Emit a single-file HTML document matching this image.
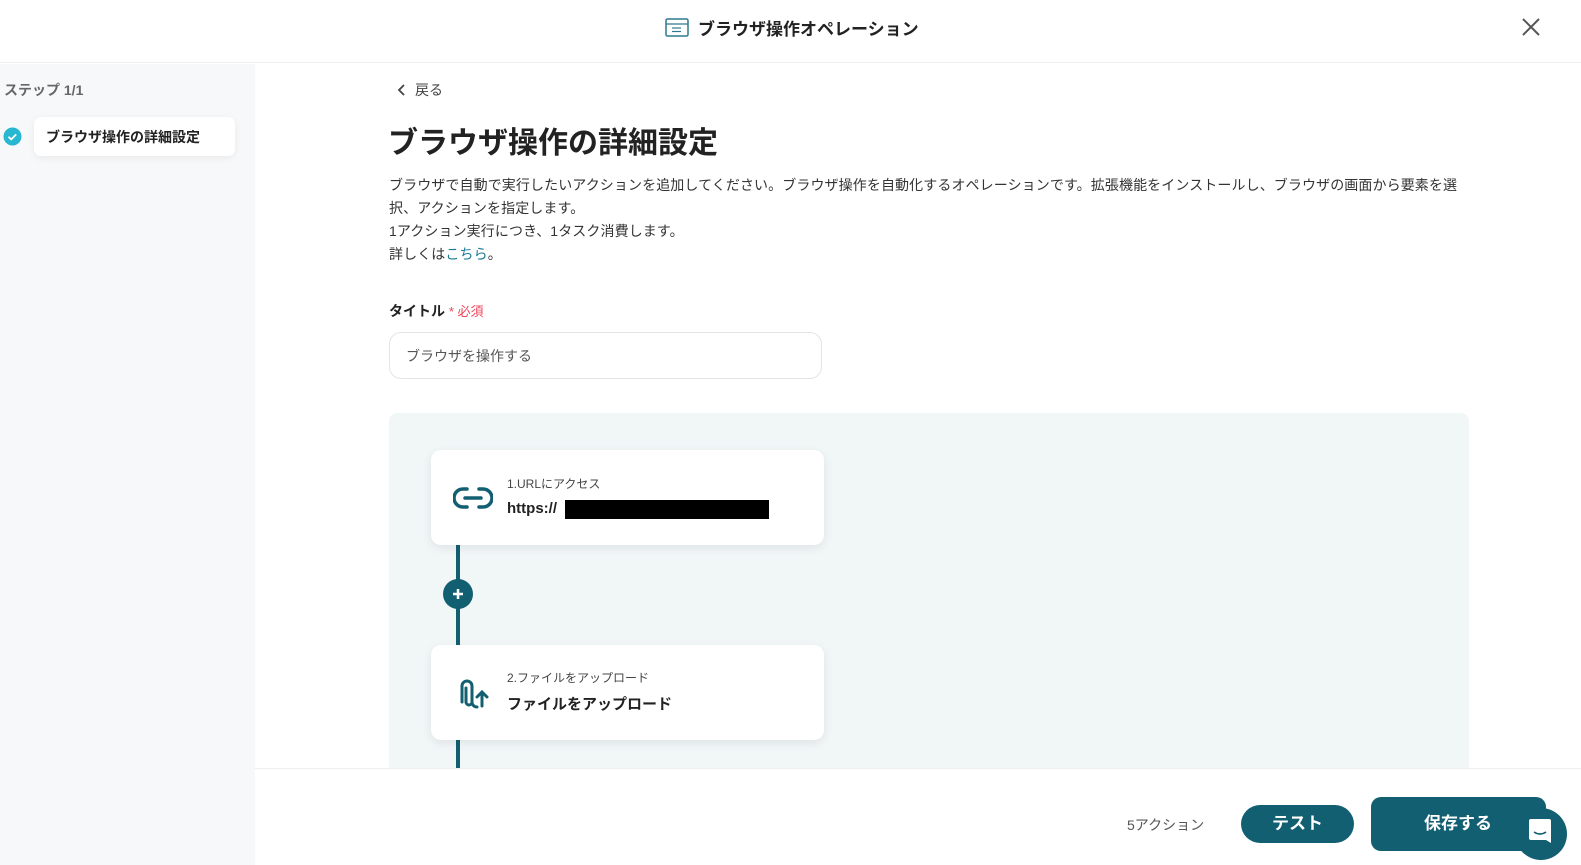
<!DOCTYPE html>
<html><head><meta charset="utf-8"><style>
*{box-sizing:border-box;margin:0;padding:0}
body{width:1581px;height:865px;overflow:hidden;background:#fff;font-family:"Liberation Sans","Noto Sans CJK JP",sans-serif;color:#222;position:relative}
.hdr{position:absolute;left:0;top:0;width:1581px;height:63px;border-bottom:1px solid #eceeef;background:#fff}
.side{position:absolute;left:0;top:64px;width:255px;height:801px;background:#f7f8f9}
.abs{position:absolute}
.panel{position:absolute;left:389px;top:413px;width:1080px;height:360px;background:#f1f6f7;border-radius:8px}
.card{position:absolute;left:431px;width:393px;height:95px;background:#fff;border-radius:10px;box-shadow:0 3px 10px rgba(0,0,0,.08)}
.line{position:absolute;left:456px;width:4px;background:#135f72}
.foot{position:absolute;left:255px;top:768px;width:1326px;height:97px;background:#fff;border-top:1px solid #eceeef}
</style></head><body>
<div class="hdr">
 <svg class="abs" style="left:665px;top:18px" width="24" height="19" viewBox="0 0 24 19"><rect x="1" y="1" width="22" height="17" rx="1.5" fill="none" stroke="#2f7a8c" stroke-width="1.5"/><line x1="1" y1="6" x2="23" y2="6" stroke="#2f7a8c" stroke-width="1.2"/><line x1="7" y1="10" x2="16" y2="10" stroke="#2f7a8c" stroke-width="1.2"/><line x1="7" y1="13.5" x2="16" y2="13.5" stroke="#2f7a8c" stroke-width="1.2"/></svg>
 <div class="abs" style="left:698px;top:15px;font-size:17px;font-weight:bold;color:#222">ブラウザ操作オペレーション</div>
 <svg class="abs" style="left:1521px;top:17px" width="20" height="20" viewBox="0 0 20 20"><path d="M2 2L18 18M18 2L2 18" stroke="#555" stroke-width="2"/></svg>
</div>
<div class="side">
 <div class="abs" style="left:4px;top:16px;font-size:14px;color:#666;font-weight:bold">ステップ 1/1</div>
 <svg class="abs" style="left:3px;top:63px" width="19" height="19"><circle cx="9.5" cy="9.5" r="9" fill="#27b7d0"/><path d="M5.5 9.8l2.7 2.6 5-5" stroke="#fff" stroke-width="1.8" fill="none"/></svg>
 <div class="abs" style="left:34px;top:53px;width:201px;height:39px;background:#fff;border-radius:7px;box-shadow:0 2px 8px rgba(0,0,0,.06);font-size:14px;font-weight:bold;padding:10px 0 0 12px">ブラウザ操作の詳細設定</div>
</div>
<svg class="abs" style="left:396px;top:83px" width="10" height="14"><path d="M8 2L3 7l5 5" stroke="#444" stroke-width="1.8" fill="none"/></svg>
<div class="abs" style="left:415px;top:80px;font-size:14px;color:#444">戻る</div>
<div class="abs" style="left:388px;top:118px;font-size:30px;font-weight:bold;color:#222">ブラウザ操作の詳細設定</div>
<div class="abs" style="left:389px;top:174px;width:1082px;font-size:14px;line-height:23px;color:#333;letter-spacing:0.1px">ブラウザで自動で実行したいアクションを追加してください。ブラウザ操作を自動化するオペレーションです。拡張機能をインストールし、ブラウザの画面から要素を選<br>択、アクションを指定します。<br>1アクション実行につき、1タスク消費します。<br>詳しくは<span style="color:#1d7b95">こちら</span>。</div>
<div class="abs" style="left:389px;top:301px;font-size:14px;font-weight:bold">タイトル <span style="color:#f0445c;font-weight:normal;font-size:13px">* 必須</span></div>
<div class="abs" style="left:389px;top:332px;width:433px;height:47px;border:1px solid #e2e4e7;border-radius:12px;font-size:14px;color:#555;padding:13px 0 0 16px">ブラウザを操作する</div>
<div class="panel"></div>
<div class="line" style="top:545px;height:100px"></div>
<div class="line" style="top:739px;height:30px"></div>
<svg class="abs" style="left:443px;top:579px" width="30" height="30"><circle cx="15" cy="15" r="15" fill="#135f72"/><path d="M15 10v10M10 15h10" stroke="#fff" stroke-width="2.5"/></svg>
<div class="card" style="top:450px">
 <svg class="abs" style="left:22px;top:36px" width="40" height="24" viewBox="0 0 40 24"><path d="M14 3H10a9 9 0 0 0 0 18h4M26 3h4a9 9 0 0 1 0 18h-4M12 12h16" stroke="#135f72" stroke-width="3.5" fill="none" stroke-linecap="round"/></svg>
 <div class="abs" style="left:76px;top:25px;font-size:12px;color:#444">1.URLにアクセス</div>
 <div class="abs" style="left:76px;top:50px;font-size:15px;font-weight:bold;color:#222">https://</div>
 <div class="abs" style="left:134px;top:50px;width:204px;height:19px;background:#000"></div>
</div>
<div class="card" style="top:645px">
 <svg class="abs" style="left:25px;top:29px" width="36" height="36" viewBox="0 0 36 36"><path d="M6 28V12a5 5 0 0 1 10 0v16a3 3 0 0 1-6 0V14M16 12v16a5 5 0 0 0 5 5" stroke="#135f72" stroke-width="3" fill="none" stroke-linecap="round"/><path d="M26 32V18M21 23l5-5 5 5" stroke="#135f72" stroke-width="3" fill="none" stroke-linecap="round"/></svg>
 <div class="abs" style="left:76px;top:24px;font-size:12px;color:#444">2.ファイルをアップロード</div>
 <div class="abs" style="left:76px;top:48px;font-size:15px;font-weight:bold;color:#222">ファイルをアップロード</div>
</div>
<div class="foot"></div>
<div class="abs" style="left:1127px;top:815px;font-size:14px;color:#555">5アクション</div>
<div class="abs" style="left:1241px;top:805px;width:113px;height:38px;background:#135f72;border-radius:19px;color:#fff;font-size:17px;font-weight:bold;text-align:center;line-height:38px">テスト</div>
<div class="abs" style="left:1371px;top:797px;width:175px;height:54px;background:#135f72;border-radius:10px;color:#fff;font-size:17px;font-weight:bold;padding-left:53px;line-height:54px">保存する</div>
<div class="abs" style="left:1515px;top:808px;width:52px;height:52px;background:#135f72;border-radius:50%"></div>
<svg class="abs" style="left:1527px;top:817px" width="26" height="28" viewBox="0 0 26 28"><path d="M4 2h18a2 2 0 0 1 2 2v22l-5-3H4a2 2 0 0 1-2-2V4a2 2 0 0 1 2-2z" fill="#fff"/><path d="M7 15q6 4 12 0" stroke="#135f72" stroke-width="1.6" fill="none"/></svg>
</body></html>
